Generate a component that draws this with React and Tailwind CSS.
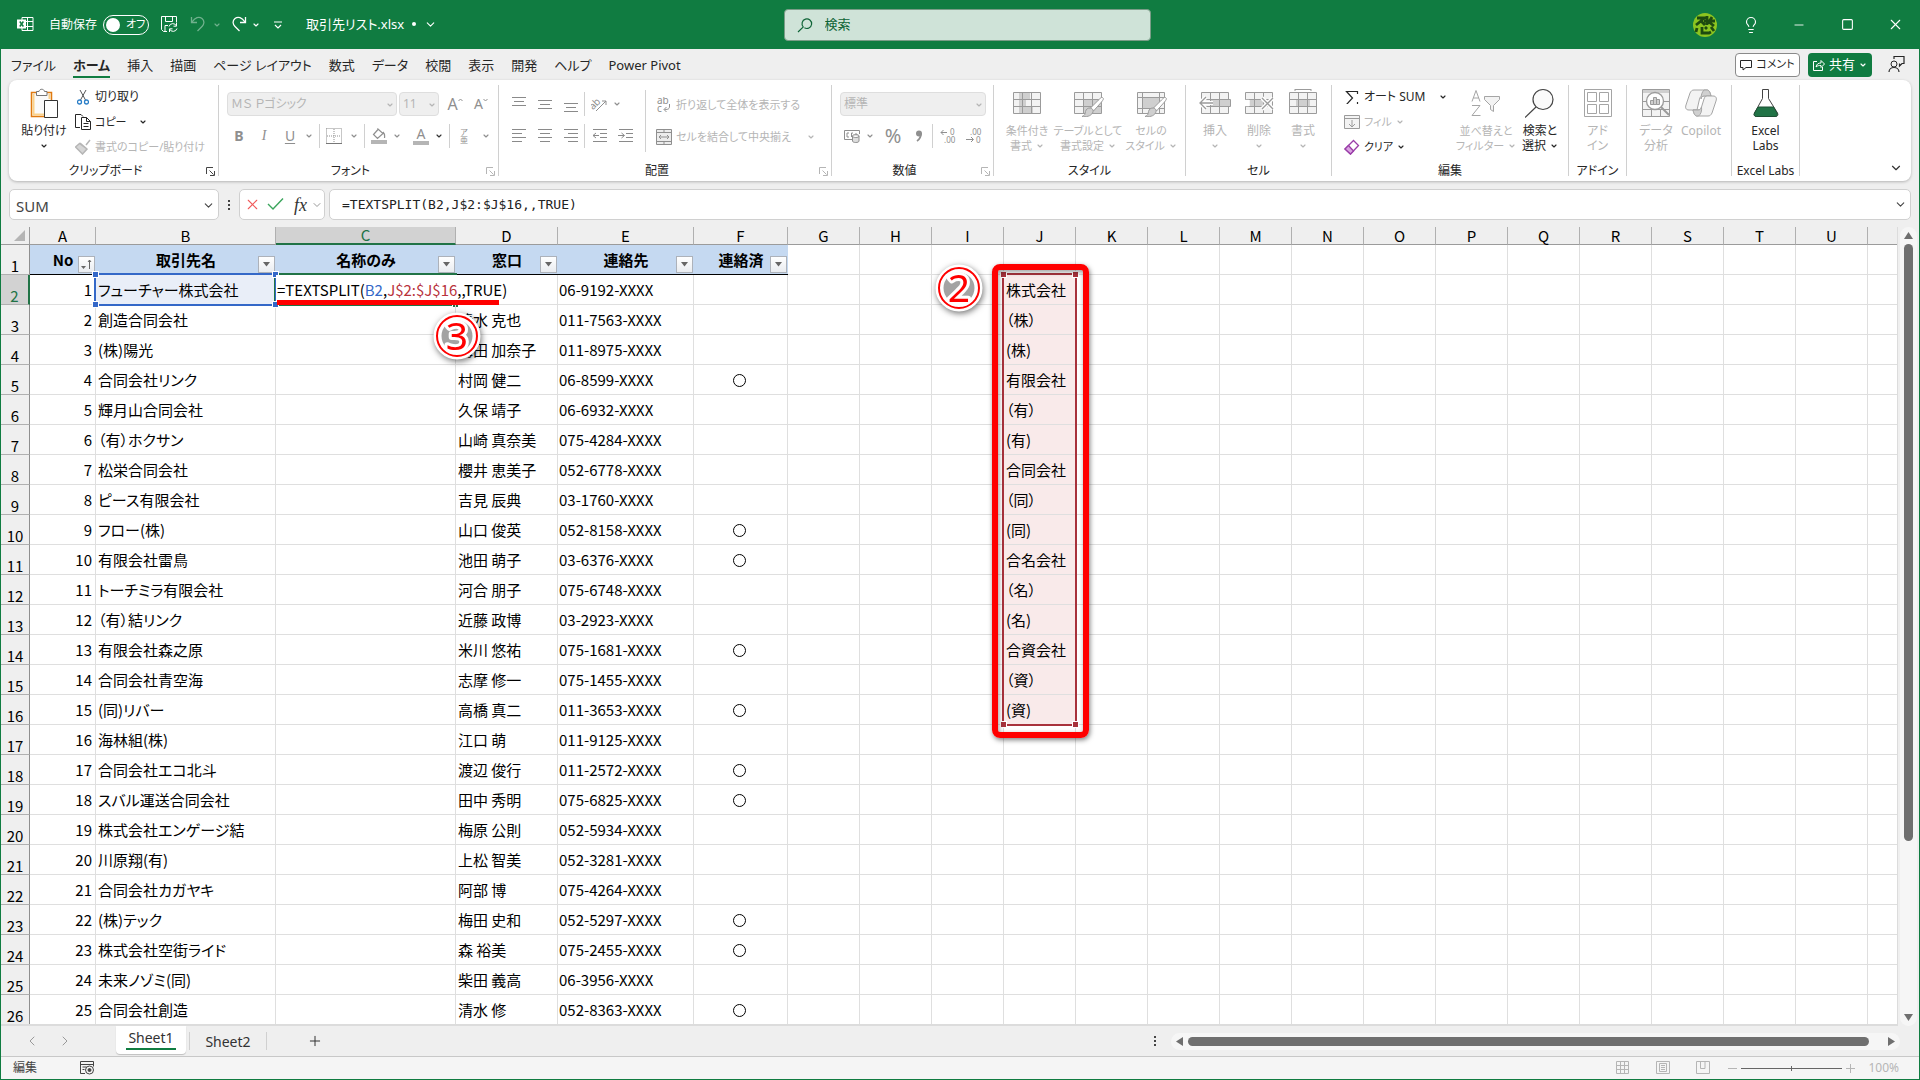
import React, { useState } from 'react';
import { ChevronDown, ChevronLeft, ChevronRight, Lightbulb, Minus, Plus, Square, X } from 'lucide-react';

const columns = [
    ['A', 66], ['B', 180], ['C', 180], ['D', 102], ['E', 136], ['F', 94],
    ...'GHIJKLMNOPQRSTUV'.split('').map((letter) => [letter, 72]),
];

const headers = ['No', '取引先名', '名称のみ', '窓口', '連絡先', '連絡済'];

const clients = [
    ['フューチャー株式会社', '', '06-9192-XXXX', ''],
    ['創造合同会社', '清水 克也', '011-7563-XXXX', ''],
    ['(株)陽光', '梅田 加奈子', '011-8975-XXXX', ''],
    ['合同会社リンク', '村岡 健二', '06-8599-XXXX', '○'],
    ['輝月山合同会社', '久保 靖子', '06-6932-XXXX', ''],
    ['（有）ホクサン', '山崎 真奈美', '075-4284-XXXX', ''],
    ['松栄合同会社', '櫻井 恵美子', '052-6778-XXXX', ''],
    ['ピース有限会社', '吉見 辰典', '03-1760-XXXX', ''],
    ['フロー(株)', '山口 俊英', '052-8158-XXXX', '○'],
    ['有限会社雷鳥', '池田 萌子', '03-6376-XXXX', '○'],
    ['トーチミラ有限会社', '河合 朋子', '075-6748-XXXX', ''],
    ['（有）結リンク', '近藤 政博', '03-2923-XXXX', ''],
    ['有限会社森之原', '米川 悠祐', '075-1681-XXXX', '○'],
    ['合同会社青空海', '志摩 修一', '075-1455-XXXX', ''],
    ['(同)リバー', '高橋 真二', '011-3653-XXXX', '○'],
    ['海林組(株)', '江口 萌', '011-9125-XXXX', ''],
    ['合同会社エコ北斗', '渡辺 俊行', '011-2572-XXXX', '○'],
    ['スバル運送合同会社', '田中 秀明', '075-6825-XXXX', '○'],
    ['株式会社エンゲージ結', '梅原 公則', '052-5934-XXXX', ''],
    ['川原翔(有)', '上松 智美', '052-3281-XXXX', ''],
    ['合同会社カガヤキ', '阿部 博', '075-4264-XXXX', ''],
    ['(株)テック', '梅田 史和', '052-5297-XXXX', '○'],
    ['株式会社空街ライド', '森 裕美', '075-2455-XXXX', '○'],
    ['未来ノゾミ(同)', '柴田 義高', '06-3956-XXXX', ''],
    ['合同会社創造', '清水 修', '052-8363-XXXX', '○'],
];

const suffixes = [
    '株式会社', '（株）', '(株)', '有限会社', '（有）', '(有)', '合同会社', '（同）',
    '(同)', '合名会社', '（名）', '(名)', '合資会社', '（資）', '(資)',
];

const Chevron = ({ className = '' }) => (
    <ChevronDown size={8} strokeWidth={3.5} className={`shrink-0 ${className}`} />
);

const Divider = ({ className = 'h-6' }) => <span className={`w-px shrink-0 bg-[#d0d0d0] ${className}`} />;

const Svg = ({ w = 16, h = w, children, ...rest }) => (
    <svg width={w} height={h} viewBox={`0 0 ${w} ${h}`} fill="none" stroke="currentColor" className="shrink-0" {...rest}>
        {children}
    </svg>
);

/* ---------- title bar ---------- */

const TitleBar = () => {
    const [autoSave, setAutoSave] = useState(false);
    return (
        <header className="flex h-[49px] shrink-0 items-center text-white bg-[#107c41]">
            <div className="flex min-w-0 flex-1 items-center pl-4 text-xs">
                <Svg w={17}>
                    <path d="M5 1.5h11v13H5zM10.5 1.5v13M5 5.5h11M5 10.5h11" />
                    <path d="M0 3.5h9v9H0z" fill="#fff" stroke="none" />
                    <path d="M2.8 5.5l3.6 5M6.4 5.5l-3.6 5" stroke="#107c41" strokeWidth="1.5" />
                </Svg>
                <span id="autosave" className="ml-[15px]">自動保存</span>
                <button role="switch" aria-checked={autoSave} aria-labelledby="autosave" onClick={() => setAutoSave(!autoSave)}
                    className="ml-1.5 flex h-5 w-[46px] items-center gap-1.5 rounded-full border border-white pl-[2px] text-[11px]">
                    <span className="size-[14px] rounded-full bg-white" />
                    {autoSave ? 'オン' : 'オフ'}
                </button>
                <button aria-label="上書き保存" className="ml-3">
                    <Svg w={17}>
                        <path d="M6 15.5H2.5l-2-2v-13h15v6M4.5.5v5h7v-5M4 15V9.500h3" />
                        <path d="M8 10.500a4 4 0 0 1 7.500-.5M15.500 7v3.200h-3M16 12.500a4 4 0 0 1-7.500.5M8.500 16v-3.200h3" />
                    </Svg>
                </button>
                <button aria-label="元に戻す" className="ml-3 flex items-center gap-1.5 opacity-40">
                    <Svg w={17}><path d="M1.500 1v5.500H7M2 6C5 1.500 9 0 12 2.500s2 6 0 8L7.500 15" strokeWidth="1.3" /></Svg>
                    <Chevron />
                </button>
                <button aria-label="やり直し" className="ml-2.5 flex items-center gap-1">
                    <Svg w={17}><path d="M14.500 1v5.500H9M14 6C11 1.500 7 0 4 2.500s-2 6 0 8L8.500 15" strokeWidth="1.3" /></Svg>
                    <Chevron />
                </button>
                <button aria-label="クイック アクセス ツール バーのユーザー設定" className="ml-3.5">
                    <Svg w={8} h={8}><path d="M0 1h8M1 4l3 3 3-3" strokeWidth="1.200" /></Svg>
                </button>
                <button className="ml-6 flex items-center gap-2 text-[13px]">
                    取引先リスト.xlsx <span className="size-1 rounded-full bg-white" />
                    <ChevronDown size={13} strokeWidth={2} />
                </button>
            </div>
            <label className="mr-0.5 flex h-8 w-[367px] items-center rounded-sm border border-[#7a9c87] bg-[#cfe3d8] pl-3 text-[#0e6336]">
                <Svg w={16}><path d="M6.200 9.800a4.800 4.800 0 1 1 1.200 1M6.600 9.600L1 15" strokeWidth="1.200" /></Svg>
                <input aria-label="検索" placeholder="検索" className="ml-3 min-w-0 flex-1 bg-transparent text-[13px] outline-none placeholder:text-[#0e6336]" />
            </label>
            <div className="flex flex-1 items-center justify-end">
                <button aria-label="アカウント" className="grid h-8 w-11 place-items-center">
                    <Svg w={24}>
                        <circle cx="12" cy="12" r="12" fill="#8cc520" stroke="none" />
                        <path d="M4 5h7l-3 3 4 4M3 12l5-4M14 3v9M11 8h11M19 4l-3 5 5 4M4 15l-1 4M9 14v6h7l2-1M12 14l2 2M18 14l3 4" stroke="#1d4a10" strokeWidth="2.800" />
                    </Svg>
                </button>
                <button aria-label="ヒント" className="grid h-8 w-12 place-items-center"><Lightbulb size={18} strokeWidth={1.500} /></button>
                <button aria-label="最小化" className="grid h-8 w-12 place-items-center"><Minus size={14} strokeWidth={1.500} /></button>
                <button aria-label="最大化" className="grid h-8 w-12 place-items-center"><Square size={13} strokeWidth={2} /></button>
                <button aria-label="閉じる" className="grid h-8 w-12 place-items-center"><X size={17} strokeWidth={1.500} /></button>
            </div>
        </header>
    );
};

/* ---------- ribbon tabs ---------- */

const tabs = ['ファイル', 'ホーム', '挿入', '描画', 'ページ レイアウト', '数式', 'データ', '校閲', '表示', '開発', 'ヘルプ', 'Power Pivot'];

const RibbonTabs = () => (
    <div className="flex h-[31px] items-center justify-between pl-[10px] pr-3.5 text-[13px] text-[#262626]">
        <nav className="flex items-center gap-[17px]">
            {tabs.map((tab) => (
                <button key={tab} className={tab === 'ホーム' ? 'h-[26px] border-b-2 border-[#107c41] pt-1 font-bold' : 'h-[26px] pt-[2px]'}>{tab}</button>
            ))}
        </nav>
        <div className="flex items-center gap-2">
            <button className="flex h-6 w-[65px] items-center justify-center gap-1 whitespace-nowrap rounded border border-[#8a8a8a] bg-white text-[11px]">
                <Svg w={12}><path d="M.5 1.500h11v7H6l-3 2.500V8.500H.5z" /></Svg>
                コメント
            </button>
            <button className="flex h-6 w-16 items-center justify-center gap-1 rounded bg-[#107c41] text-white">
                <Svg w={12}><path d="M4 2.500H.5v9h9V8M3 8c.5-3 2.500-4 5-4V1.500l3.500 3.500L8 8.500V6.500C6 6.500 4.500 6.500 3 8z" /></Svg>
                共有
                <Chevron />
            </button>
            <button aria-label="ユーザー" className="ml-2">
                <Svg w={17}><circle cx="6" cy="8" r="3" /><path d="M1 16c0-6 10-6 10 0M6 3V.5h10v7h-2l-2.500 2.500V7.500" strokeWidth="1.200" /></Svg>
            </button>
        </div>
    </div>
);

/* ---------- ribbon ---------- */

const Group = ({ className, label, launcher, off, children }) => (
    <section className={`flex shrink-0 ${className}`}>
        <div className="flex min-w-0 flex-1 flex-col">
            <div className="flex h-20">{children}</div>
            <div className={`relative flex h-[21px] items-center justify-center whitespace-nowrap pt-px text-[#262626] ${launcher ? 'pr-4' : ''}`}>
                {label}
                {launcher && (
                    <button aria-label={`${label}の設定`} className={`absolute right-[3px] ${off ? 'text-[#b5b5b5]' : 'text-[#444]'}`}>
                        <Svg w={9}><path d="M.5 7V.5H7M3.500 3.500l4 4M8.500 4v4.500H4" /></Svg>
                    </button>
                )}
            </div>
        </div>
        <Divider className="my-[5px]" />
    </section>
);

const BigButton = ({ className, icon, lines, arrow, off = true }) => (
    <button className={`flex shrink-0 flex-col items-center whitespace-nowrap pt-[7px] leading-[15px] ${off ? 'text-[#b5b5b5]' : 'text-[#262626]'} ${className}`}>
        <span className="mb-1 flex h-8 items-center">{icon}</span>
        {lines.map((line, i) => (
            <span key={line} className="flex h-[15px] items-center gap-1">
                {line}
                {arrow && i === 1 && <Chevron />}
            </span>
        ))}
        {arrow && lines.length === 1 && <Chevron className="mt-1" />}
    </button>
);

const SmallButton = ({ icon, text, arrow, off, className = '' }) => (
    <button className={`flex h-[26px] items-center gap-1 whitespace-nowrap ${off ? 'text-[#b5b5b5]' : 'text-[#262626]'} ${className}`}>
        <span className="flex w-4 justify-center">{icon}</span>
        {text}
        {arrow && <Chevron className={arrow} />}
    </button>
);

const Tool = ({ label, className = 'w-[26px]', children }) => (
    <button aria-label={label} className={`flex h-6 shrink-0 items-center justify-center ${className}`}>{children}</button>
);

const Picker = ({ label, value, className }) => (
    <div className={`relative h-6 shrink-0 rounded border border-[#dedede] bg-[#efefef] text-[#b5b5b5] ${className}`}>
        <select aria-label={label} className="size-full appearance-none bg-transparent pl-[3px] text-xs outline-none">
            <option>{value}</option>
        </select>
        <Chevron className="pointer-events-none absolute right-0.5 top-2" />
    </div>
);

const Lines = ({ d }) => <Svg w={16}><path d={d} stroke="#8a8a8a" /></Svg>;

const CellsIcon = ({ fill, children }) => (
    <Svg w={32} h={28} stroke="#9b9b9b">
        <path d="M2.500 3.500h27v21h-27z" fill="#f3f3f3" />
        <path d={fill} fill="#cfcfcf" stroke="none" />
        <path d="M2.500 10.500h27M2.500 17.500h27M11.500 3.500v21M20.500 3.500v21" />
        {children}
    </Svg>
);

const Brush = () => (
    <>
        <path d="M30.500 8.500c1.500 1 1 2-1 4.500l-8 9-3-3 8-8c2-2 3-3 4-2.500z" fill="#fff" />
        <path d="M18 19c2.500 0 4 2.500 2.500 5-2 3.500-6.500 4-10.500 3.500 3-1 3-2.500 3.500-5C14 20 16 19 18 19z" fill="#cfcfcf" />
    </>
);

const Ribbon = () => (
    <div className="mx-2 flex h-[101px] rounded-lg bg-white text-xs shadow-[0_1px_3px_rgba(0,0,0,0.25)]">
        <Group className="w-[210px]" label="クリップボード" launcher>
            <BigButton off={false} arrow className="ml-3 w-[46px]" lines={['貼り付け']} icon={(
                <Svg w={28} h={32}>
                    <path d="M1.500 5.500h20v24h-20z" fill="#fafafa" stroke="#e07a10" strokeWidth="1.500" />
                    <path d="M3.500 7v21M19.500 7v5M3 27.500h11" stroke="#fbd28a" strokeWidth="2" />
                    <path d="M6.500 4.500H9c.5-3 5-3 5.500 0H17v4H6.500z" fill="#fff" stroke="#777" />
                    <path d="M14.500 13.500h13v17h-13z" fill="#fff" stroke="#333" />
                </Svg>
            )} />
            <div className="ml-2 flex flex-col pt-1">
                <SmallButton text="切り取り" icon={(
                    <Svg w={12} h={16}>
                        <path d="M3 1l5.500 10M9 1L3.500 11" stroke="#555" />
                        <circle cx="2.500" cy="13" r="2" stroke="#2a7ec7" strokeWidth="1.300" /><circle cx="9.500" cy="13" r="2" stroke="#2a7ec7" strokeWidth="1.300" />
                    </Svg>
                )} />
                <SmallButton className="text-[11px]" text="コピー" arrow="ml-2" icon={(
                    <Svg w={16}><path d="M5 13.500H.5V.5H6l2 2M6.500 3.500h5l4 4v8h-9zM11.500 3.500v4h4M8.500 9.500h5M8.500 12.500h5" /></Svg>
                )} />
                <SmallButton off className="text-[11px]" text="書式のコピー/貼り付け" icon={(
                    <Svg w={16}><path d="M15 1l-4 5M5 4l7 6M4.500 4.500L.5 8l7 7 4.500-5z" fill="#d5d5d5" strokeWidth="1.500" /></Svg>
                )} />
            </div>
        </Group>

        <Group className="w-[280px]" label="フォント" launcher off>
            <div className="flex flex-col gap-2 pl-2 pt-3 text-[#8f8f8f]">
                <div className="flex items-center">
                    <Picker label="フォント名" value="ＭＳ Ｐゴシック" className="w-[170px]" />
                    <Picker label="フォント サイズ" value="11" className="ml-0.5 w-10" />
                    <Tool label="拡大" className="ml-1.5 w-5 text-base">A<Svg w={5} h={12}><path d="M.5 3l2-2 2 2" /></Svg></Tool>
                    <Tool label="縮小" className="ml-1.5 w-5 text-sm">A<Svg w={5} h={12}><path d="M.5 1l2 2 2-2" /></Svg></Tool>
                </div>
                <div className="flex items-center text-sm">
                    <Tool label="太字" className="w-6"><b>B</b></Tool>
                    <Tool label="斜体"><i className="font-['Liberation_Serif']">I</i></Tool>
                    <Tool label="下線"><u className="underline-offset-2">U</u></Tool>
                    <Chevron className="ml-0.5" />
                    <Divider className="ml-1.5 h-6" />
                    <Tool label="罫線" className="ml-1 w-5">
                        <Svg w={16}><path d="M.5.5h15v15M.5.5v15M8 1v14M1 8h14" strokeDasharray="1 1" /><path d="M0 15.500h16" stroke="#777" /></Svg>
                    </Tool>
                    <Chevron className="ml-1.5" />
                    <Divider className="ml-1.5 h-6" />
                    <Tool label="塗りつぶし" className="ml-1.5 w-4">
                        <Svg w={16}><path d="M7 1.500L2.500 6.500l4 4L12 5.500 7 1zM12 4c2 2 2 3 1.500 6" strokeWidth="1.200" /><path d="M0 14h16" stroke="#b5b5b5" strokeWidth="4" /></Svg>
                    </Tool>
                    <Chevron className="ml-1.5" />
                    <Tool label="フォントの色" className="ml-3 w-4"><span className="h-[17px] w-4 border-b-4 border-[#b5b5b5] text-center text-sm leading-3">A</span></Tool>
                    <Chevron className="ml-1.5 text-[#333]" />
                    <Divider className="ml-1.5 h-6" />
                    <Tool label="ふりがな" className="ml-1 w-5 flex-col text-[8px] leading-2"><span>ア</span><span>亜</span></Tool>
                    <Chevron className="ml-2" />
                </div>
            </div>
        </Group>

        <Group className="w-[333px]" label="配置" launcher off>
            <div className="flex flex-col gap-2 pl-[7px] pt-3 text-[#8f8f8f]">
                <div className="flex items-center">
                    <Tool label="上揃え"><Lines d="M1 1.500h14M3 5.500h10M1 9.500h14" /></Tool>
                    <Tool label="上下中央揃え"><Lines d="M1 4.500h14M3 8.500h10M1 12.500h14" /></Tool>
                    <Tool label="下揃え"><Lines d="M1 7.500h14M3 11.500h10M1 15.500h14" /></Tool>
                    <Divider />
                    <Tool label="方向" className="ml-1.5 w-4">
                        <Svg w={16}><path d="M5 15L15 5M11 5h4v4" /><text x="-2" y="11" transform="rotate(-45 4 8)" fontSize="10" fill="currentColor" stroke="none">ab</text></Svg>
                    </Tool>
                    <Chevron className="ml-1.5" />
                </div>
                <div className="flex items-center">
                    <Tool label="左揃え"><Lines d="M1 1.500h14M1 5.500h10M1 9.500h14M1 13.500h10" /></Tool>
                    <Tool label="中央揃え"><Lines d="M1 1.500h14M3 5.500h10M1 9.500h14M3 13.500h10" /></Tool>
                    <Tool label="右揃え"><Lines d="M1 1.500h14M5 5.500h10M1 9.500h14M5 13.500h10" /></Tool>
                    <Divider />
                    <Tool label="インデントを減らす" className="ml-0.5 w-[26px]"><Lines d="M1 1.500h14M8 5.500h7M8 9.500h7M1 13.500h14M1 7.500h6M4 5L1 7.500 4 10" /></Tool>
                    <Tool label="インデントを増やす"><Lines d="M1 1.500h14M8 5.500h7M8 9.500h7M1 13.500h14M0 7.500h6M3.500 5l3 2.500-3 2.500" /></Tool>
                </div>
            </div>
            <Divider className="ml-1.5 mt-2.5 h-[62px]" />
            <div className="flex flex-col gap-1.5 pl-2.5 pt-3">
                <SmallButton off className="text-[11px]" text="折り返して全体を表示する" icon={(
                    <Svg w={16}><text x="1" y="7" fontSize="10" fill="#8f8f8f" stroke="none">ab</text><text x="1" y="15" fontSize="10" fill="#8f8f8f" stroke="none">c</text><path d="M13.500 7v2c0 3-1 3.500-5 3.500M10.500 10L8 12.500l2.500 2.500" stroke="#8f8f8f" /></Svg>
                )} />
                <SmallButton off className="text-[11px]" text="セルを結合して中央揃え" arrow="ml-3" icon={(
                    <Svg w={16} stroke="#8f8f8f"><path d="M.5.5h15v15H.5z" fill="#ececec" /><path d="M.5 3.500h15M.5 12.500h15M8 .5v3M8 12.500v3M3 8h10M5 6L3 8l2 2M11 6l2 2-2 2" /></Svg>
                )} />
            </div>
        </Group>

        <Group className="w-[162px]" label="数値" launcher off>
            <div className="flex flex-col gap-2 pl-2 pt-3 text-[#8f8f8f]">
                <Picker label="表示形式" value="標準" className="w-[146px]" />
                <div className="flex items-center">
                    <Tool label="通貨" className="ml-1 w-4">
                        <Svg w={16}><path d="M8 11.500H.5v-9h15V6M5 5H3v4h2M7.500 9V5H9M12 5v1" /><path d="M8.500 8c0-2 6.500-2 6.500 0v5c0 2-6.500 2-6.500 0zM8.500 8c0 2 6.500 2 6.500 0" fill="#ddd" /></Svg>
                    </Tool>
                    <Chevron className="ml-1.5" />
                    <Tool label="パーセント" className="ml-1.5 w-[26px] text-[20px]">%</Tool>
                    <Tool label="桁区切り"><Svg w={8} h={12}><circle cx="4" cy="3.500" r="3" fill="currentColor" stroke="none" /><path d="M6 3c0 4-1 6-4 8" strokeWidth="1.800" /></Svg></Tool>
                    <Divider />
                    <Tool label="小数点以下を増やす" className="ml-0.5 w-[26px]">
                        <Svg w={16}><text x="10" y="7" fontSize="8" fill="currentColor" stroke="none">0</text><text x="4" y="15" fontSize="8" fill="currentColor" stroke="none">.00</text><path d="M7 4.500H1M3.500 2L1 4.500 3.500 7" /></Svg>
                    </Tool>
                    <Tool label="小数点以下を減らす">
                        <Svg w={16}><text x="4" y="7" fontSize="8" fill="currentColor" stroke="none">.00</text><text x="10" y="15" fontSize="8" fill="currentColor" stroke="none">0</text><path d="M0 11.500h7M5 9l2.500 2.500L5 14" /></Svg>
                    </Tool>
                </div>
            </div>
        </Group>

        <Group className="w-48" label="スタイル">
            <BigButton arrow className="ml-1.5 w-[54px] text-[11px]" lines={['条件付き', '書式']}
                icon={<CellsIcon fill="M8 4h11v6H8zM8 11h7v6H8zM8 18h14v6H8z" />} />
            <BigButton arrow className="w-[68px] text-[11px]" lines={['テーブルとして', '書式設定']}
                icon={<CellsIcon fill="M12 11h17v13H12z"><Brush /></CellsIcon>} />
            <BigButton arrow className="w-[58px] text-[11px]" lines={['セルの', 'スタイル']} icon={(
                <Svg w={32} h={28} stroke="#9b9b9b">
                    <path d="M2.500 3.500h27v21h-27z" fill="#f3f3f3" />
                    <path d="M7.500 8.500h17v11h-17z" fill="#cfcfcf" />
                    <path d="M2.500 8.500h27M2.500 19.500h27M7.500 3.500v21M24.500 3.500v21" /><Brush />
                </Svg>
            )} />
        </Group>

        <Group className="w-[146px]" label="セル">
            <BigButton arrow className="ml-[7px] w-11" lines={['挿入']} icon={(
                <CellsIcon fill="M12 11h19v7H12z"><path d="M12 10.500h19.500v7H12" /><path d="M14 14H1M7 8l-6 6 6 6" stroke="#fff" strokeWidth="4" /><path d="M14 14H1M7 8l-6 6 6 6" strokeWidth="1.300" /></CellsIcon>
            )} />
            <BigButton arrow className="w-11" lines={['削除']} icon={(
                <CellsIcon fill="M7 11h18v7H7z"><path d="M1 10.800h5v6.400H1z" fill="#fff" stroke="none" /><path d="M19 9l11 11M30 9L19 20" stroke="#fff" strokeWidth="4" /><path d="M19 9l11 11M30 9L19 20" strokeWidth="1.300" /></CellsIcon>
            )} />
            <BigButton arrow className="w-11" lines={['書式']} icon={(
                <CellsIcon fill="M9 11h14v7H9z"><path d="M8 .5h16M8 0v2M24 0v2" /></CellsIcon>
            )} />
        </Group>

        <Group className="w-[237px]" label="編集">
            <div className="flex w-[127px] flex-col pl-3 pt-1">
                <SmallButton text="オート SUM" arrow="ml-2.5" icon={<Svg w={14}><path d="M12.500 4V1.500H1.500L7.500 8l-6 6.500h11V12" strokeWidth="1.200" /></Svg>} />
                <SmallButton off className="text-[11px]" text="フィル" arrow="ml-0" icon={<Svg w={16} stroke="#9b9b9b"><path d="M.5 1.500h15v13H.5zM.5 4.500h15" fill="#f3f3f3" /><path d="M8 6v7M5 10l3 3 3-3" /></Svg>} />
                <SmallButton className="text-[11px]" text="クリア" arrow="ml-0" icon={(
                    <Svg w={16} stroke="#9a3ea8"><path d="M9.500 1.500l5 5-8 8.500-5.500-5z" fill="#fff" strokeWidth="1.300" /><path d="M4.500 6.500l5 5.500-3 3L1 10z" fill="#d9a3e0" strokeWidth="1.300" /></Svg>
                )} />
            </div>
            <BigButton arrow className="w-[54px] text-[11px]" lines={['並べ替えと', 'フィルター']} icon={(
                <Svg w={30} h={28} stroke="#a5a5a5"><path d="M1 12.500L5 1.500l4 11M2.300 9h5.400M1 16.500h8L1 26.500h8.500" /><path d="M13.500 7.500h15v3l-6 6v6l-3-2v-4l-6-6z" fill="#f3f3f3" /></Svg>
            )} />
            <BigButton off={false} arrow className="w-[54px]" lines={['検索と', '選択']} icon={(
                <Svg w={30} h={30}><circle cx="18" cy="11.500" r="10" fill="#fafafa" stroke="#444" strokeWidth="1.200" /><path d="M11 19L0 29.500" stroke="#444" strokeWidth="1.200" /></Svg>
            )} />
        </Group>

        <Group className="w-[58px]" label="アドイン">
            <BigButton className="w-full" lines={['アド', 'イン']} icon={(
                <Svg w={28} stroke="#a5a5a5"><path d="M.5.5h27v27H.5z" /><path d="M3.500 3.500h9v9h-9zM15.500 3.500h9v9h-9zM3.500 15.500h9v9h-9zM15.500 15.500h9v9h-9z" /></Svg>
            )} />
        </Group>

        <Group className="w-[105px]">
            <BigButton className="ml-1.5 w-[46px]" lines={['データ', '分析']} icon={(
                <Svg w={28} stroke="#9b9b9b">
                    <path d="M.5.5h27v27H.5z" fill="#f3f3f3" /><path d="M1 1h26v3H1z" fill="#cfcfcf" stroke="none" /><path d="M.5 12.500h27M.5 20.500h27M9.500 20v7M18.500 20v7" />
                    <circle cx="13" cy="12" r="8.500" fill="#fff" strokeWidth="1.300" /><path d="M8.500 11.500h3v4h-3zM11.500 8.500h3v7h-3zM14.500 10.500h3v5h-3z" fill="#cfcfcf" /><path d="M19 18l8 8" strokeWidth="2" />
                </Svg>
            )} />
            <BigButton className="w-11" lines={['Copilot']} icon={(
                <Svg w={32} h={28} stroke="#a5a5a5">
                    <path d="M9 1h13c2 0 3 2 4 6h-8c-2 0-3 1-3.500 3L12 21H4c-3 0-4-2-3-5L5 4c1-2 2-3 4-3z" fill="#f3f3f3" />
                    <path d="M19 1h3c2 0 3 2 4 6h-7c-1.500 0-2.500 1-3 3 0-4 1-7 3-9z" fill="#d0d0d0" />
                    <path d="M23 27H12c-2 0-3-2-4-6h5c2 0 3-1 3.500-3L19 10c.5-2 1.500-3 3.500-3H28c3 0 4 2 3 5l-4 12c-1 2-2 3-4 3z" fill="#f3f3f3" />
                    <path d="M8 21h5c2 0 3-1 3.500-3 .5 4-.5 7-3 9H12c-2 0-3-2-4-6z" fill="#d0d0d0" />
                </Svg>
            )} />
        </Group>

        <Group className="w-[68px]" label="Excel Labs">
            <BigButton off={false} className="w-full" lines={['Excel', 'Labs']} icon={(
                <Svg w={26} h={28}>
                    <path d="M9.500.5h6v9L24.500 24c1 2 0 3.500-2 3.500h-19c-2 0-3-1.500-2-3.500l8-14.500z" fill="#fff" stroke="#444" />
                    <path d="M5 18h15.500l3.500 6c1 2 0 3.500-2 3.500H3.500c-2 0-3-1.500-2-3.500z" fill="#217346" stroke="#1d4f33" />
                </Svg>
            )} />
        </Group>
        <div className="flex flex-1 items-end justify-end pb-1.5 pr-2">
            <button aria-label="リボンを折りたたむ"><ChevronDown size={14} strokeWidth={2} className="text-[#333]" /></button>
        </div>
    </div>
);

/* ---------- formula bar ---------- */

const FormulaBar = () => (
    <div className="mx-2 mt-2 flex h-[31px] items-center">
        <div className="relative h-full w-[210px] rounded-[5px] border border-[#d0d0d0] bg-white">
            <input aria-label="名前ボックス" defaultValue="SUM" className="size-full bg-transparent pl-1.5 pt-0.5 text-[15px] text-[#444] outline-none" />
            <ChevronDown size={13} strokeWidth={2} className="absolute right-[3px] top-[9px] text-[#444]" />
        </div>
        <span className="flex w-5 flex-col items-center gap-0.5">
            <i className="size-[2px] bg-[#444]" /><i className="size-[2px] bg-[#444]" /><i className="size-[2px] bg-[#444]" />
        </span>
        <div className="flex h-full w-[86px] items-center rounded-[5px] border border-[#d0d0d0] bg-white pl-1">
            <button aria-label="キャンセル"><X size={17} strokeWidth={1.500} className="text-[#f05a5a]" /></button>
            <button aria-label="入力" className="ml-1.5"><Svg w={17} stroke="#3ba55c"><path d="M1 8l5 5L16 2.500" strokeWidth="1.400" /></Svg></button>
            <button className="ml-2.5 flex items-center gap-1 font-['Liberation_Serif'] text-lg italic text-[#333]">
                fx <ChevronDown size={12} strokeWidth={2} className="text-[#999]" />
            </button>
        </div>
        <div className="relative ml-1 h-full flex-1 rounded-[5px] border border-[#d0d0d0] bg-white">
            <input aria-label="数式バー" defaultValue="=TEXTSPLIT(B2,J$2:$J$16,,TRUE)"
                className="size-full bg-transparent pl-3 font-['DejaVu_Sans_Mono'] text-[13px] text-[#222] outline-none" />
            <ChevronDown size={13} strokeWidth={2} className="absolute right-[3px] top-2 text-[#444]" />
        </div>
    </div>
);

/* ---------- sheet ---------- */

const Handle = ({ className }) => <span className={`absolute size-[7px] border border-white ${className}`} />;

const FilterButton = ({ label, sorted }) => (
    <button aria-label={`${label}のフィルター`} className="absolute bottom-px right-px grid size-[17px] place-items-center border border-[#adb2ba] bg-linear-to-b from-white to-[#e9ecf0] text-[#666]">
        {sorted
            ? <Svg w={13}><path d="M1 8h5L3.500 11z" fill="currentColor" stroke="none" /><path d="M9.500 11V2M8 4l1.500-2L11 4" /></Svg>
            : <Svg w={9} h={5}><path d="M1 0h7L4.500 4.500z" fill="currentColor" stroke="none" /></Svg>}
    </button>
);

const RowHead = ({ n }) => (
    <th className={`border-b border-b-[#b0b0b0] p-0 pt-3 text-center text-[15px] font-normal leading-4 ${n === 2
        ? 'border-r-2 border-r-[#217346] bg-[#d2d2d2] text-[#217346]'
        : 'border-r border-r-[#8f8f8f] bg-[#efefef]'}`}>
        {n}
    </th>
);

const cell = 'relative border-b border-r border-[#dfdfdf] p-0';

const DataRow = ({ n }) => {
    const [name, contact, phone, done] = clients[n - 2];
    const editing = n === 2;
    return (
        <tr className="h-[30px]">
            <RowHead n={n} />
            <td className={`${cell} pr-[3px] text-right`}>{n - 1}</td>
            <td className={`${cell} pl-[2px] ${editing ? 'bg-[#e9eef8]' : ''}`}>
                {name}
                {editing && (
                    <span className="pointer-events-none absolute -inset-x-[2px] -bottom-[2px] -top-[2px] z-10 border-2 border-[#3468c8]">
                        <Handle className="-left-1 -top-1 bg-[#3468c8]" /><Handle className="-right-1 -top-1 bg-[#3468c8]" />
                        <Handle className="-bottom-1 -left-1 bg-[#3468c8]" /><Handle className="-bottom-1 -right-1 bg-[#3468c8]" />
                    </span>
                )}
            </td>
            <td className={cell}>
                {editing && (
                    <>
                        <span className="pointer-events-none absolute -inset-[2px] border-2 border-[#217346]">
                            <Handle className="-bottom-1 -right-1 bg-[#217346]" />
                        </span>
                        <span className="absolute left-0 top-0 z-10 flex h-[26px] items-center whitespace-nowrap bg-white pl-px pt-1">
                            =TEXTSPLIT(<span className="text-[#3468c8]">B2</span>,<span className="text-[#b8323c]">J$2:$J$16</span>,,TRUE)
                        </span>
                        <span className="absolute left-px top-[25px] z-20 h-[5px] w-[222px] bg-[#ff0000]" />
                    </>
                )}
            </td>
            <td className={`${cell} pl-[2px]`}>{contact}</td>
            <td className={`${cell} pl-px`}>{phone}</td>
            <td className={`${cell} text-center`}>
                {done && <span aria-label="済" className="mb-0.5 mr-0.5 inline-block size-[13px] rounded-full border border-black align-middle" />}
            </td>
            {columns.slice(6).map(([letter]) => (
                <td key={letter} className={`${cell} ${letter === 'J' && suffixes[n - 2] ? 'bg-[#f9eaea] pl-[2px]' : ''}`}>
                    {letter === 'J' && suffixes[n - 2]}
                    {letter === 'J' && editing && (
                        <span className="pointer-events-none absolute -left-[2px] -top-[2px] z-10 h-[453px] w-[75px] border-2 border-[#a8323c]">
                            <Handle className="-left-1 -top-1 bg-[#a8323c]" /><Handle className="-right-1 -top-1 bg-[#a8323c]" />
                            <Handle className="-bottom-1 -left-1 bg-[#a8323c]" /><Handle className="-bottom-1 -right-1 bg-[#a8323c]" />
                        </span>
                    )}
                </td>
            ))}
        </tr>
    );
};

const Callout = ({ n, className }) => (
    <svg width="60" height="60" viewBox="0 0 60 60" className={`absolute z-30 drop-shadow-[1px_2px_3px_rgba(0,0,0,0.55)] ${className}`}>
        <circle cx="30" cy="30" r="19" fill="#a3a3a3" />
        <circle cx="30" cy="30" r="19.500" fill="none" stroke="#fff" strokeWidth="8" />
        <text x="30" y="44" textAnchor="middle" fontSize="39" fill="#f00" stroke="#fff" strokeWidth="6" strokeLinejoin="round" paintOrder="stroke">{n}</text>
        <circle cx="30" cy="30" r="20" fill="none" stroke="#f00" strokeWidth="2" />
    </svg>
);

const Sheet = () => (
    <main className="relative min-w-0 flex-1 overflow-hidden border-b-2 border-r border-[#dcdcdc] bg-white">
        <table className="w-max table-fixed border-separate border-spacing-0 font-['Noto_Sans_CJK_JP',sans-serif] text-[15px] leading-5 text-black">
            <colgroup>
                <col className="w-[29px]" />
                {columns.map(([letter, width]) => <col key={letter} style={{ width }} />)}
            </colgroup>
            <thead>
                <tr className="h-[18px] leading-4">
                    <th className="border-b border-r border-[#9b9b9b] bg-[#efefef] p-0">
                        <Svg w={11} className="ml-auto mr-1"><path d="M11 0v11H0z" fill="#b5b5b5" stroke="none" /></Svg>
                    </th>
                    {columns.map(([letter]) => (
                        <th key={letter} className={letter === 'C'
                            ? 'border-b-2 border-r border-b-[#217346] border-r-[#b0b0b0] bg-[#d2d2d2] p-0 font-normal text-[#217346]'
                            : 'border-b border-r border-b-[#9b9b9b] border-r-[#b0b0b0] bg-[#efefef] p-0 pt-px font-normal'}>
                            {letter}
                        </th>
                    ))}
                </tr>
            </thead>
            <tbody>
                <tr className="h-[30px]">
                    <RowHead n={1} />
                    {headers.map((header, i) => (
                        <th key={header} className="relative border-b border-black bg-[#c5d9f1] p-0 font-bold">
                            {header}
                            <FilterButton label={header} sorted={i === 0} />
                        </th>
                    ))}
                    {columns.slice(6).map(([letter]) => <td key={letter} className={cell} />)}
                </tr>
                {clients.map((client, i) => <DataRow key={client[0]} n={i + 2} />)}
            </tbody>
        </table>
        <div className="absolute left-[991px] top-[37px] z-20 h-[474px] w-[97px] rounded-lg border-6 border-[#ff0000] shadow-[1px_2px_5px_rgba(0,0,0,0.5),inset_1px_2px_5px_rgba(0,0,0,0.4)]" />
        <Callout n={2} className="left-[928px] top-[31px]" />
        <Callout n={3} className="left-[426px] top-[79px]" />
    </main>
);

const VerticalScroll = () => (
    <div className="ml-[2px] mr-[2px] flex w-[17px] flex-col items-center rounded-full bg-[#f6f6f6] py-[5px] text-[#6f6f6f]">
        <Svg w={9} h={8}><path d="M4.500 0L9 7H0z" fill="currentColor" stroke="none" /></Svg>
        <div className="my-1 w-full flex-1">
            <div className="mx-auto h-[78%] w-[9px] rounded-full bg-[#6f6f6f]" />
        </div>
        <Svg w={9} h={8}><path d="M4.500 8L9 1H0z" fill="currentColor" stroke="none" /></Svg>
    </div>
);

const SheetTabs = () => (
    <div className="flex h-[31px] shrink-0 items-center border-b border-[#c8c8c8] pr-[19px] text-sm text-[#333]">
        <div className="flex w-[115px] items-center gap-[17px] pl-[23px] text-[#999]">
            <button aria-label="前のシート"><ChevronLeft size={16} strokeWidth={1.500} /></button>
            <button aria-label="次のシート"><ChevronRight size={16} strokeWidth={1.500} /></button>
        </div>
        <button className="flex h-7 w-[70px] justify-center self-start rounded-b bg-white shadow-[0_1px_1px_rgba(0,0,0,0.2)]">
            <span className="h-6 border-b-2 border-[#107c41] px-0.5 leading-6 text-[#333]">Sheet1</span>
        </button>
        <Divider className="ml-[3px] h-[18px]" />
        <button className="w-[76px] pt-0.5 text-center">Sheet2</button>
        <Divider className="h-[18px]" />
        <button aria-label="新しいシート" className="ml-10"><Plus size={16} strokeWidth={1.500} /></button>
        <div className="ml-auto flex items-center">
            <span className="flex flex-col gap-0.5 pr-[15px]">
                <i className="size-[2px] bg-[#444]" /><i className="size-[2px] bg-[#444]" /><i className="size-[2px] bg-[#444]" />
            </span>
            <div className="flex h-[17px] w-[729px] items-center rounded-full bg-[#f6f6f6] px-[5px] text-[#6f6f6f]">
                <Svg w={8} h={9}><path d="M0 4.500L7 0v9z" fill="currentColor" stroke="none" /></Svg>
                <div className="mx-1 flex-1"><div className="h-[9px] w-[98%] rounded-full bg-[#6f6f6f]" /></div>
                <Svg w={8} h={9}><path d="M8 4.500L1 0v9z" fill="currentColor" stroke="none" /></Svg>
            </div>
        </div>
    </div>
);

const StatusBar = () => {
    const [zoom, setZoom] = useState(100);
    return (
        <footer className="flex h-[22px] shrink-0 items-center bg-[#f5f5f5] pl-3 pr-5 text-xs text-[#444]">
            編集
            <button aria-label="マクロの記録" className="ml-[43px]">
                <Svg w={15} h={14}><path d="M5 12.500H.5v-12h13v5M.5 3.500h13M2.500 6h4M2.500 8.500h2" /><circle cx="9.500" cy="9" r="4" /><circle cx="9.500" cy="9" r="1.500" fill="currentColor" /></Svg>
            </button>
            <div className="ml-auto flex items-center text-[#b5b5b5]">
                <button aria-label="標準"><Svg w={14}><path d="M.5.5h12v12H.5zM.5 4.500h12M.5 8.500h12M4.500.5v12M8.500.5v12" /></Svg></button>
                <button aria-label="ページ レイアウト" className="ml-[26px]"><Svg w={14}><path d="M.5.5h13v12H.5zM3.500 2.500h7v8h-7zM5 4.500h4M5 6.500h4M5 8.500h4" /></Svg></button>
                <button aria-label="改ページ プレビュー" className="ml-[26px]"><Svg w={14}><path d="M.5.5h13v12H.5zM4.500.5v7h4.500v-7" /></Svg></button>
                <button aria-label="縮小" className="ml-[18px]"><Svg w={9}><path d="M0 4.500h9" /></Svg></button>
                <input type="range" aria-label="ズーム" min="0" max="200" value={zoom} onChange={(e) => setZoom(Number(e.target.value))}
                    className="mx-1 h-px w-[101px] appearance-none bg-[#666] [&::-webkit-slider-thumb]:h-[5px] [&::-webkit-slider-thumb]:w-px [&::-webkit-slider-thumb]:appearance-none [&::-webkit-slider-thumb]:bg-[#666]" />
                <button aria-label="拡大"><Svg w={9}><path d="M0 4.500h9M4.500 0v9" /></Svg></button>
                <span className="ml-3 w-8 text-right">{zoom}%</span>
            </div>
        </footer>
    );
};

export default function App() {
    return (
        <div className="flex h-screen flex-col overflow-hidden border-x border-b border-[#107c41] bg-[#efefef] font-['Noto_Sans','Noto_Sans_CJK_JP',sans-serif] [font-feature-settings:'palt']">
            <TitleBar />
            <RibbonTabs />
            <Ribbon />
            <FormulaBar />
            <div className="mt-[7px] flex min-h-0 flex-1">
                <Sheet />
                <VerticalScroll />
            </div>
            <SheetTabs />
            <StatusBar />
        </div>
    );
}
